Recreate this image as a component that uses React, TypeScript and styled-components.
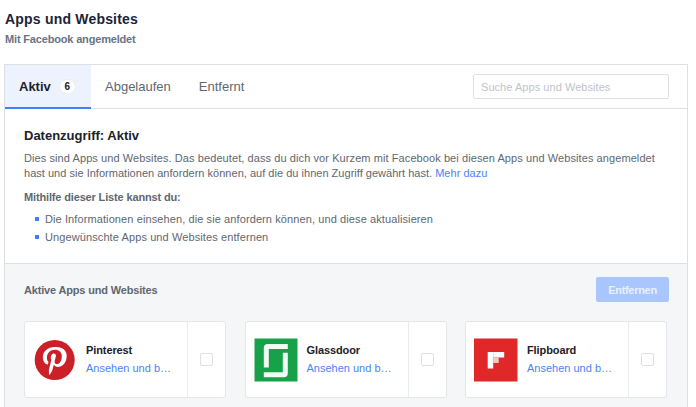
import React from "react";
import styled, { createGlobalStyle } from "styled-components";

const Global = createGlobalStyle`
  html, body { margin: 0; padding: 0; background: #fff; }
  body { font-family: "Liberation Sans", Arial, sans-serif; overflow: hidden; }
  * { box-sizing: border-box; }
`;

const Page = styled.div`
  width: 696px;
  height: 407px;
  overflow: hidden;
  padding: 11px 8px 0 4px;
`;
const Header = styled.header`
  padding-left: 1px;
  height: 53px;
`;
const Title = styled.h1`
  margin: 0;
  font-size: 14px;
  line-height: 17px;
  font-weight: 700;
  letter-spacing: 0.2px;
  color: #1c2438;
`;
const Subtitle = styled.div`
  margin-top: 4px;
  font-size: 11px;
  line-height: 14px;
  font-weight: 700;
  letter-spacing: -0.17px;
  color: #687385;
`;
const Panel = styled.section`
  border: 1px solid #dddfe2;
  border-bottom: 0;
  height: 343px;
  background: #fff;
`;
const TabBar = styled.div`
  display: flex;
  align-items: stretch;
  height: 44px;
  border-bottom: 1px solid #dddfe2;
  padding-right: 18px;
`;
const Tab = styled.div<{ $active?: boolean }>`
  display: flex;
  align-items: center;
  gap: 8px;
  padding: 0 14px;
  margin-bottom: -1px;
  font-size: 13px;
  font-weight: ${(p) => (p.$active ? 700 : 400)};
  color: ${(p) => (p.$active ? "#1d2129" : "#606770")};
  background: ${(p) => (p.$active ? "#ecf3ff" : "transparent")};
  border-bottom: 2px solid ${(p) => (p.$active ? "#4080ff" : "transparent")};
`;
const ActiveTab = styled(Tab)`
  width: 86px;
`;
const Badge = styled.span`
  display: flex;
  align-items: center;
  justify-content: center;
  width: 17px;
  height: 15px;
  border-radius: 8px;
  background: #fff;
  border: 1px solid #e9ebee;
  font-size: 10px;
  font-weight: 700;
  color: #1d2129;
`;
const SearchBox = styled.input`
  margin: 9px 0 0 auto;
  width: 196px;
  height: 25px;
  border: 1px solid #dddfe2;
  border-radius: 2px;
  padding: 0 7px;
  font-family: inherit;
  font-size: 11px;
  letter-spacing: 0.05px;
  outline: none;
  &::placeholder { color: #bec3c9; opacity: 1; }
`;
const Intro = styled.div`
  height: 155px;
  padding: 19px 18px 0 19px;
  border-bottom: 1px solid #dddfe2;
`;
const IntroTitle = styled.h2`
  margin: 0 0 7px;
  font-size: 13px;
  line-height: 16px;
  font-weight: 700;
  color: #1d2129;
`;
const Para = styled.p`
  margin: 0 0 9px;
  font-size: 11px;
  line-height: 15px;
  color: #606770;
`;
const Line = styled.span<{ $spacing?: number }>`
  display: block;
  white-space: nowrap;
  letter-spacing: ${(p) => p.$spacing ?? 0}px;
`;
const Link = styled.a`
  color: #4a84f8;
`;
const Strong = styled.div`
  font-size: 11px;
  line-height: 14px;
  font-weight: 700;
  letter-spacing: -0.15px;
  color: #606770;
  margin-bottom: 6px;
`;
const List = styled.ul`
  margin: 0;
  padding: 0;
  list-style: none;
`;
const Item = styled.li`
  display: flex;
  align-items: center;
  gap: 6px;
  padding-left: 11px;
  height: 18px;
  font-size: 11px;
  letter-spacing: 0.1px;
  color: #606770;
  &::before {
    content: "";
    width: 4px;
    height: 4px;
    background: #4080ff;
  }
`;
const Lower = styled.div`
  background: #f5f6f7;
  height: 144px;
  padding: 13px 18px 0 19px;
`;
const LowerHead = styled.div`
  display: flex;
  align-items: center;
  justify-content: space-between;
  height: 25px;
`;
const LowerTitle = styled.div`
  font-size: 11px;
  font-weight: 700;
  letter-spacing: -0.17px;
  color: #606770;
`;
const RemoveBtn = styled.button`
  width: 73px;
  height: 25px;
  border: 0;
  border-radius: 2px;
  background: #a9c6ff;
  color: #e8f0ff;
  font-family: inherit;
  font-size: 11px;
  letter-spacing: -0.3px;
  font-weight: 700;
  padding: 0;
`;
const Cards = styled.div`
  display: grid;
  grid-template-columns: repeat(3, 202px);
  column-gap: 18.5px;
  margin-top: 19px;
`;
const Card = styled.div`
  display: flex;
  height: 77px;
  background: #fff;
  border: 1px solid #e4e6e9;
  border-radius: 3px;
`;
const CardMain = styled.div`
  display: flex;
  align-items: center;
  gap: 9px;
  flex: 1;
  min-width: 0;
  padding-left: 8px;
`;
const Logo = styled.svg`
  flex: none;
  width: 44px;
  height: 44px;
  display: block;
`;
const CardText = styled.div`
  min-width: 0;
  flex: 1;
  padding-bottom: 2px;
`;
const AppName = styled.div`
  font-size: 11px;
  line-height: 14px;
  font-weight: 700;
  letter-spacing: -0.1px;
  color: #1d2129;
  margin-bottom: 4px;
`;
const AppLink = styled.div`
  font-size: 11px;
  line-height: 14px;
  color: #4a84f8;
  white-space: nowrap;
`;
const CheckCell = styled.div`
  flex: none;
  width: 38px;
  border-left: 1px solid #e9ebee;
  display: flex;
  align-items: center;
  justify-content: center;
`;
const Check = styled.span`
  width: 13px;
  height: 13px;
  border: 1px solid #dddfe2;
  border-radius: 2px;
  background: #fff;
`;

const Pinterest = () => (
  <Logo viewBox="0 0 44 44" aria-label="Pinterest">
    <circle cx="21.7" cy="22" r="20" fill="#cb2027" />
    <path
      transform="translate(0.2 0.6)"
      d="M21.6 8.5c-7 0-12 4.7-12 10.4 0 3.3 1.6 6 4.3 7 .5.2.8 0 .9-.5l.4-1.6c.1-.4.1-.6-.2-1-.8-.9-1.3-2-1.3-3.7 0-4.6 3.4-7.9 8-7.9 4.2 0 6.9 2.6 6.9 6.4 0 4.4-2 7.9-4.8 7.9-1.6 0-2.8-1.3-2.4-2.9.4-1.9 1.3-4 1.3-5.4 0-1.2-.7-2.3-2.1-2.3-1.7 0-3 1.7-3 4 0 1.5.5 2.4.5 2.4l-2.1 8.7c-.6 2.6-.1 5.7 0 6.1 0 .2.3.3.4.1.2-.2 2.3-2.9 3-5.5l1.2-4.5c.6 1.1 2.3 2.1 4 2.1 5.3 0 8.9-4.8 8.9-11.2 0-4.9-4.1-8.6-10-8.6z"
      fill="#fff"
    />
  </Logo>
);
const Glassdoor = () => (
  <Logo viewBox="0 0 44 44" aria-label="Glassdoor">
    <rect x="0.5" y="0.5" width="43" height="43" fill="#17a24a" />
    <path
      transform="translate(0.5 0)"
      d="M9.3 10a4 4 0 0 1 4-4h20v5H14.3v18.5h-5zM33.3 35.3a4 4 0 0 1-4 4h-20v-5h19v-19.5h5z"
      fill="#fff"
      opacity="0.94"
    />
  </Logo>
);
const Flipboard = () => (
  <Logo viewBox="0 0 44 44" aria-label="Flipboard">
    <rect y="0.5" width="43.5" height="43" fill="#e12828" />
    <rect x="13.7" y="14" width="5.5" height="16.5" fill="#fff" />
    <rect x="19.2" y="14" width="11" height="5.5" fill="#fff" />
    <rect x="19.2" y="19.5" width="5.5" height="5.5" fill="#f9c9c9" />
  </Logo>
);

const apps = [
  { name: "Pinterest", logo: <Pinterest /> },
  { name: "Glassdoor", logo: <Glassdoor /> },
  { name: "Flipboard", logo: <Flipboard /> },
];

export default function App() {
  return (
    <Page>
      <Global />
      <Header>
        <Title>Apps und Websites</Title>
        <Subtitle>Mit Facebook angemeldet</Subtitle>
      </Header>
      <Panel>
        <TabBar>
          <ActiveTab $active>
            Aktiv <Badge>6</Badge>
          </ActiveTab>
          <Tab>Abgelaufen</Tab>
          <Tab>Entfernt</Tab>
          <SearchBox placeholder="Suche Apps und Websites" readOnly />
        </TabBar>
        <Intro>
          <IntroTitle>Datenzugriff: Aktiv</IntroTitle>
          <Para>
            <Line $spacing={0.085}>
              Dies sind Apps und Websites. Das bedeutet, dass du dich vor Kurzem mit Facebook bei diesen Apps und Websites angemeldet
            </Line>
            <Line $spacing={0.02}>
              hast und sie Informationen anfordern können, auf die du ihnen Zugriff gewährt hast. <Link>Mehr dazu</Link>
            </Line>
          </Para>
          <Strong>Mithilfe dieser Liste kannst du:</Strong>
          <List>
            <Item>Die Informationen einsehen, die sie anfordern können, und diese aktualisieren</Item>
            <Item>Ungewünschte Apps und Websites entfernen</Item>
          </List>
        </Intro>
        <Lower>
          <LowerHead>
            <LowerTitle>Aktive Apps und Websites</LowerTitle>
            <RemoveBtn>Entfernen</RemoveBtn>
          </LowerHead>
          <Cards>
            {apps.map((a) => (
              <Card key={a.name}>
                <CardMain>
                  {a.logo}
                  <CardText>
                    <AppName>{a.name}</AppName>
                    <AppLink>Ansehen und b…</AppLink>
                  </CardText>
                </CardMain>
                <CheckCell>
                  <Check />
                </CheckCell>
              </Card>
            ))}
          </Cards>
        </Lower>
      </Panel>
    </Page>
  );
}
